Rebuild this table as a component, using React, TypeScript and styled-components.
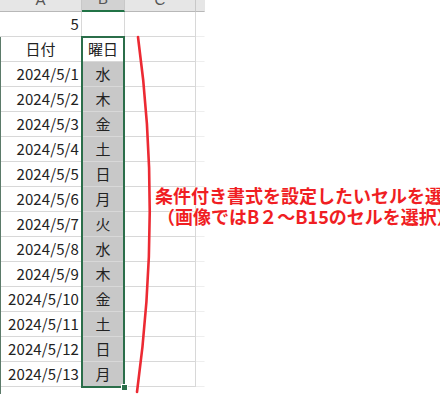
import React from "react";
import styled, { createGlobalStyle } from "styled-components";

const Global = createGlobalStyle`
  html, body { margin: 0; padding: 0; background: #fff; }
  body { width: 440px; height: 394px; overflow: hidden; }
`;

const Sheet = styled.div`
  position: relative;
  width: 440px;
  height: 394px;
  overflow: hidden;
  font-family: "Noto Sans CJK JP", "Noto Sans", sans-serif;
  color: #222;
`;

const Grid = styled.div`
  display: grid;
  grid-template-columns: 82px 43px 71px 9px;
  grid-template-rows: 12px repeat(15, 25px);
  width: 205px;
`;

const HeadCell = styled.div<{ $active?: boolean; $last?: boolean }>`
  box-sizing: border-box;
  background: ${(p) => (p.$active ? "#d2d2d2" : "#e6e6e6")};
  border-right: 1px solid ${(p) => (p.$last ? "transparent" : "#c8c8c8")};
  border-bottom: ${(p) => (p.$active ? "2px solid #217346" : "1px solid #b8b8b8")};
  color: #555;
  font-family: "Liberation Sans", sans-serif;
  font-size: 15px;
  line-height: 12px;
  text-align: center;
  overflow: hidden;
  display: flex;
  justify-content: center;
  align-items: flex-end;
  span { display: block; transform: translateY(-5px); }
`;

const Cell = styled.div<{ $align?: "left" | "right" | "center"; $fill?: boolean; $last?: boolean }>`
  box-sizing: border-box;
  border-right: 1px solid ${(p) => (p.$last ? "transparent" : "#d8d8d8")};
  border-bottom: 1px solid ${(p) => (p.$last ? "#eeeeee" : "#d8d8d8")};
  background: ${(p) => (p.$fill ? "#c8c8c8" : "#fff")};
  font-size: 15px;
  line-height: 24px;
  padding: 0 2px 0 2px;
  display: flex;
  align-items: center;
  justify-content: ${(p) =>
    p.$align === "right" ? "flex-end" : p.$align === "center" ? "center" : "flex-start"};
  white-space: nowrap;
  overflow: visible;
  letter-spacing: 0.1px;
`;

const LeftEdge = styled.div`
  position: absolute;
  left: 0;
  top: 37px;
  width: 1px;
  height: 357px;
  background: #5b7a69;
`;

const Selection = styled.div`
  position: absolute;
  left: 81px;
  top: 36px;
  width: 44px;
  height: 352px;
  box-sizing: border-box;
  border: 2px solid #2b6e4a;
  pointer-events: none;
`;

const Handle = styled.div`
  position: absolute;
  left: 121px;
  top: 384px;
  width: 7px;
  height: 7px;
  background: #2b6e4a;
  border: 1px solid #fff;
  box-sizing: border-box;
`;

const Curve = styled.svg`
  position: absolute;
  left: 0;
  top: 0;
`;

const Note = styled.div`
  position: absolute;
  left: 155px;
  top: 185px;
  color: #f01e23;
  font-family: "Noto Sans CJK JP", sans-serif;
  font-weight: 700;
  font-size: 18px;
  line-height: 21px;
  white-space: nowrap;
  text-shadow: 0 0 2px #fff, 0 0 2px #fff;
`;

const NoteLine = styled.div<{ $indent?: number }>`
  padding-left: ${(p) => p.$indent ?? 0}px;
`;

const days = ["水", "木", "金", "土", "日", "月", "火", "水", "木", "金", "土", "日", "月"];

export default function App() {
  return (
    <>
      <Global />
      <Sheet>
        <Grid>
          <HeadCell><span>A</span></HeadCell>
          <HeadCell $active><span>B</span></HeadCell>
          <HeadCell><span>C</span></HeadCell>
          <HeadCell $last />

          <Cell $align="right">5</Cell>
          <Cell />
          <Cell />
          <Cell $last />

          <Cell $align="center">日付</Cell>
          <Cell $align="center">曜日</Cell>
          <Cell />
          <Cell $last />

          {days.map((d, i) => (
            <React.Fragment key={i}>
              <Cell $align="right">{`2024/5/${i + 1}`}</Cell>
              <Cell $align="center" $fill>{d}</Cell>
              <Cell />
              <Cell $last />
            </React.Fragment>
          ))}
        </Grid>
        <LeftEdge />
        <Selection />
        <Handle />
        <Curve width="440" height="394" viewBox="0 0 440 394">
          <path d="M138 37 Q 162 210 137 392" fill="none" stroke="#ec2a33" strokeWidth="2.6" strokeLinecap="round" />
        </Curve>
        <Note>
          <NoteLine>条件付き書式を設定したいセルを選択</NoteLine>
          <NoteLine $indent={2}>（画像ではB２～B15のセルを選択）</NoteLine>
        </Note>
      </Sheet>
    </>
  );
}
